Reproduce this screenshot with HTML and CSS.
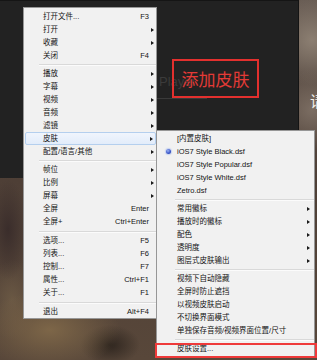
FILE: index.html
```html
<!DOCTYPE html>
<html lang="zh">
<head>
<meta charset="utf-8">
<title>皮肤菜单</title>
<link rel="stylesheet" href="styles.css">
</head>
<body>
<div class="desk">
  <div class="appwin">
    <div class="brand">Player</div>
    <div class="brand-line"></div>
  </div>
  <div class="callout">添加皮肤</div>
  <div class="edge-text">请</div>

  <div class="menu main">
    <div class="item"><span class="gut"></span><span class="label">打开文件...</span><span class="key">F3</span><span class="arr"></span></div>
    <div class="item"><span class="gut"></span><span class="label">打开</span><span class="arr"><i class="tri"></i></span></div>
    <div class="item"><span class="gut"></span><span class="label">收藏</span><span class="arr"><i class="tri"></i></span></div>
    <div class="item"><span class="gut"></span><span class="label">关闭</span><span class="key">F4</span><span class="arr"></span></div>
    <div class="sep s5"></div>
    <div class="item"><span class="gut"></span><span class="label">播放</span><span class="arr"><i class="tri"></i></span></div>
    <div class="item"><span class="gut"></span><span class="label">字幕</span><span class="arr"><i class="tri"></i></span></div>
    <div class="item"><span class="gut"></span><span class="label">视频</span><span class="arr"><i class="tri"></i></span></div>
    <div class="item"><span class="gut"></span><span class="label">音频</span><span class="arr"><i class="tri"></i></span></div>
    <div class="item"><span class="gut"></span><span class="label">滤镜</span><span class="arr"><i class="tri"></i></span></div>
    <div class="item hot"><span class="gut"></span><span class="label">皮肤</span><span class="arr"><i class="tri"></i></span></div>
    <div class="item"><span class="gut"></span><span class="label">配置/语言/其他</span><span class="arr"><i class="tri"></i></span></div>
    <div class="sep s5"></div>
    <div class="item"><span class="gut"></span><span class="label">帧位</span><span class="arr"><i class="tri"></i></span></div>
    <div class="item"><span class="gut"></span><span class="label">比例</span><span class="arr"><i class="tri"></i></span></div>
    <div class="item"><span class="gut"></span><span class="label">屏幕</span><span class="arr"><i class="tri"></i></span></div>
    <div class="item"><span class="gut"></span><span class="label">全屏</span><span class="key">Enter</span><span class="arr"></span></div>
    <div class="item"><span class="gut"></span><span class="label">全屏+</span><span class="key">Ctrl+Enter</span><span class="arr"></span></div>
    <div class="sep s6"></div>
    <div class="item"><span class="gut"></span><span class="label">选项...</span><span class="key">F5</span><span class="arr"></span></div>
    <div class="item"><span class="gut"></span><span class="label">列表...</span><span class="key">F6</span><span class="arr"></span></div>
    <div class="item"><span class="gut"></span><span class="label">控制...</span><span class="key">F7</span><span class="arr"></span></div>
    <div class="item"><span class="gut"></span><span class="label">属性...</span><span class="key">Ctrl+F1</span><span class="arr"></span></div>
    <div class="item"><span class="gut"></span><span class="label">关于...</span><span class="key">F1</span><span class="arr"></span></div>
    <div class="sep s6"></div>
    <div class="item"><span class="gut"></span><span class="label">退出</span><span class="key">Alt+F4</span><span class="arr"></span></div>
  </div>

  <div class="menu sub">
    <div class="item"><span class="gut"></span><span class="label">[内置皮肤]</span><span class="arr"></span></div>
    <div class="item"><span class="gut"><i class="dot"></i></span><span class="label">iOS7 Style Black.dsf</span><span class="arr"></span></div>
    <div class="item"><span class="gut"></span><span class="label">iOS7 Style Popular.dsf</span><span class="arr"></span></div>
    <div class="item"><span class="gut"></span><span class="label">iOS7 Style White.dsf</span><span class="arr"></span></div>
    <div class="item"><span class="gut"></span><span class="label">Zetro.dsf</span><span class="arr"></span></div>
    <div class="sep s5"></div>
    <div class="item"><span class="gut"></span><span class="label">常用徽标</span><span class="arr"><i class="tri"></i></span></div>
    <div class="item"><span class="gut"></span><span class="label">播放时的徽标</span><span class="arr"><i class="tri"></i></span></div>
    <div class="item"><span class="gut"></span><span class="label">配色</span><span class="arr"><i class="tri"></i></span></div>
    <div class="item"><span class="gut"></span><span class="label">透明度</span><span class="arr"><i class="tri"></i></span></div>
    <div class="item"><span class="gut"></span><span class="label">图层式皮肤输出</span><span class="arr"><i class="tri"></i></span></div>
    <div class="sep s5"></div>
    <div class="item"><span class="gut"></span><span class="label">视频下自动隐藏</span><span class="arr"></span></div>
    <div class="item"><span class="gut"></span><span class="label">全屏时防止遮挡</span><span class="arr"></span></div>
    <div class="item"><span class="gut"></span><span class="label">以视频皮肤启动</span><span class="arr"></span></div>
    <div class="item"><span class="gut"></span><span class="label">不切换界面模式</span><span class="arr"></span></div>
    <div class="item"><span class="gut"></span><span class="label">单独保存音频/视频界面位置/尺寸</span><span class="arr"></span></div>
    <div class="sep s5"></div>
    <div class="item"><span class="gut"></span><span class="label">皮肤设置...</span><span class="arr"></span></div>
  </div>

  <div class="mark"></div>
</div>
</body>
</html>
```

FILE: styles.css
```css
html, body {
  margin: 0;
  padding: 0;
}
body {
  width: 317px;
  height: 360px;
  overflow: hidden;
  font-family: "Liberation Sans", "Noto Sans CJK SC", sans-serif;
}
.desk {
  position: relative;
  width: 317px;
  height: 360px;
  overflow: hidden;
  background:
    radial-gradient(circle at 312px 40px, #8c7f72 0, rgba(140,127,114,0) 45px),
    radial-gradient(circle at 312px 110px, #7b6d62 0, rgba(123,109,98,0) 40px),
    radial-gradient(ellipse 70px 40px at 50px 330px, #7d6648 0, rgba(125,102,72,0) 100%),
    radial-gradient(ellipse 30px 20px at 110px 345px, #2f261f 0, rgba(47,38,31,0) 100%),
    radial-gradient(ellipse 20px 50px at 8px 230px, #3a2d2b 0, rgba(58,45,43,0) 100%),
    radial-gradient(ellipse 25px 40px at 12px 300px, #6a5844 0, rgba(106,88,68,0) 100%),
    linear-gradient(180deg, #665a52 0, #4e3f36 50%, #58473a 100%);
}

/* dark application window on the desktop */
.appwin {
  position: absolute;
  left: 0;
  top: 0;
  width: 299px;
  height: 178px;
  box-sizing: border-box;
  background: #222222;
  border-top: 1px solid #151515;
  border-right: 1px solid #141414;
  padding: 73px 0 0 159px;
}
.brand {
  font-size: 13px;
  line-height: 16px;
  color: #3b3b3b;
}
.brand-line {
  margin: 8px 0 0 -60px;
  width: 108px;
  height: 1px;
  background: #3a3a3a;
}

/* annotation overlays */
.callout {
  position: absolute;
  left: 172px;
  top: 59px;
  width: 83px;
  height: 35px;
  border: 2px solid #e3302e;
  display: flex;
  align-items: center;
  justify-content: center;
  font-family: "Noto Sans CJK SC", sans-serif;
  font-size: 17px;
  color: #e33a36;
  letter-spacing: 0;
}
.edge-text {
  position: absolute;
  left: 310px;
  top: 92px;
  font-family: "Noto Sans CJK SC", sans-serif;
  font-size: 15px;
  line-height: 18px;
  color: #f4f0ea;
}
.mark {
  position: absolute;
  left: 155px;
  top: 343px;
  width: 158px;
  height: 11px;
  border: 2px solid #ef3a3a;
}

/* menus */
.menu {
  position: absolute;
  box-sizing: border-box;
  background: #f1f1f1;
  border: 1px solid #979797;
  display: flex;
  flex-direction: column;
  font-size: 7.5px;
  color: #141414;
}
.main {
  left: 23px;
  top: 7px;
  width: 134px;
  padding: 2px 0 0 0;
}
.sub {
  left: 156px;
  top: 130px;
  width: 159px;
  padding: 1px 0 1px 0;
}
.item {
  display: flex;
  align-items: center;
  height: 13px;
  box-sizing: border-box;
  white-space: nowrap;
}
.gut {
  width: 19px;
  flex: none;
  display: flex;
  align-items: center;
  justify-content: center;
}
.sub .gut {
  width: 20px;
}
.label {
  flex: 1;
  line-height: 13px;
}
.key {
  line-height: 13px;
}
.arr {
  width: 7px;
  flex: none;
  display: flex;
  align-items: center;
  padding-left: 2px;
  box-sizing: border-box;
}
.sub .arr {
  width: 8px;
  padding-left: 1px;
}
.tri {
  display: block;
  width: 0;
  height: 0;
  border-left: 3px solid #1a1a1a;
  border-top: 2.5px solid transparent;
  border-bottom: 2.5px solid transparent;
}
.dot {
  display: block;
  width: 5px;
  height: 5px;
  border-radius: 50%;
  background: radial-gradient(circle at 40% 35%, #9db3f2 0, #3552c8 60%, #2a3f9a 100%);
  box-shadow: 0 0 1px 1px rgba(170, 190, 240, 0.6);
  margin-left: 2px;
}
.hot {
  margin: 0 0 0 1px;
  border: 1px solid #b4cfee;
  border-radius: 2px;
  background: linear-gradient(180deg, #f0f5fd 0, #e2ecfa 100%);
}
.hot .gut {
  width: 17px;
}
.sep {
  display: flex;
  align-items: center;
  flex: none;
}
.sep::after {
  content: "";
  display: block;
  height: 1px;
  flex: 1;
  background: #d9d9d9;
  box-shadow: 0 1px 0 #fbfbfb;
}
.main .sep {
  padding-left: 15px;
}
.sub .sep {
  padding-left: 18px;
}
.s5 {
  height: 5px;
}
.s6 {
  height: 6px;
}
```
